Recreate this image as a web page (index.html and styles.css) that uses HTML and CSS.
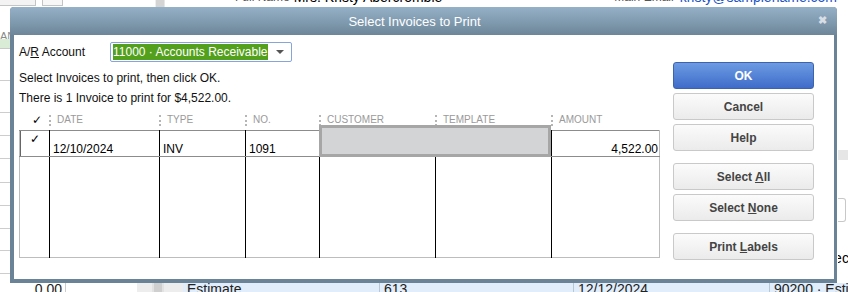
FILE: index.html
```html
<!DOCTYPE html>
<html lang="en">
<head>
    <meta charset="UTF-8">
    <title>Select Invoices to Print</title>
    <link rel="stylesheet" href="styles.css">
</head>
<body>
    <div class="screen">
        <div class="top-strip">
            <span class="top-box"></span>
            <span class="top-btn"></span>
            <span class="top-scroll"></span>
            <span class="top-label name-label">Full Name</span>
            <span class="top-value">Mrs. Kristy Abercrombie</span>
            <span class="top-label email-label">Main Email</span>
            <span class="top-link">kristy@samplename.com</span>
        </div>
        <div class="middle">
            <div class="left-col">
                <div class="lc-head">AN</div>
                <div class="lc-green"></div>
                <div class="lc-row" style="height:32px"></div>
                <div class="lc-row" style="height:32px"></div>
                <div class="lc-row" style="height:23px"></div>
                <div class="lc-row" style="height:23px"></div>
                <div class="lc-row" style="height:24px"></div>
                <div class="lc-row" style="height:23px"></div>
                <div class="lc-row" style="height:23px"></div>
                <div class="lc-row" style="height:22px"></div>
                <div class="lc-row" style="height:23px"></div>
            </div>
            <div class="mid-col"></div>
            <div class="right-col">
                <div class="rc-gap" style="height:143px"></div>
                <div class="rc-band"></div>
                <div class="rc-gap" style="height:38px"></div>
                <div class="rc-btn"></div>
                <div class="rc-gap" style="height:28px"></div>
                <div class="rc-text">Decl</div>
            </div>
        </div>
        <div class="bottom-strip">
            <div class="bs-num">0.00</div>
            <div class="bs-blank"></div>
            <div class="bs-scroll"><span></span></div>
            <div class="bs-row">
                <div class="bs-cell" style="width:192px">Estimate</div>
                <div class="bs-cell" style="width:189px">613</div>
                <div class="bs-cell" style="width:191px">12/12/2024</div>
                <div class="bs-cell">90200 · Estimates</div>
            </div>
        </div>
    </div>

    <div class="dialog">
        <div class="titlebar">
            <span class="title">Select Invoices to Print</span>
            <span class="close">&#10006;</span>
        </div>
        <div class="dialog-body">
            <div class="main">
                <div class="account-row">
                    <label class="account-label">A/<u>R</u> Account</label>
                    <div class="combo">
                        <span class="combo-text">11000 · Accounts Receivable</span>
                        <span class="combo-arrow"></span>
                    </div>
                </div>
                <p class="info">Select Invoices to print, then click OK.</p>
                <p class="info">There is 1 Invoice to print for $4,522.00.</p>

                <div class="grid-head">
                    <div class="gh-check">&#10003;</div>
                    <div class="gh-col">DATE</div>
                    <div class="gh-col">TYPE</div>
                    <div class="gh-col">NO.</div>
                    <div class="gh-col">CUSTOMER</div>
                    <div class="gh-col">TEMPLATE</div>
                    <div class="gh-col">AMOUNT</div>
                </div>
                <div class="grid-wrap">
                    <table class="grid">
                        <colgroup>
                            <col style="width:30px">
                            <col style="width:110px">
                            <col style="width:86px">
                            <col style="width:74px">
                            <col style="width:116px">
                            <col style="width:116px">
                            <col>
                        </colgroup>
                        <tr class="row">
                            <td class="check-cell">&#10003;</td>
                            <td>12/10/2024</td>
                            <td>INV</td>
                            <td>1091</td>
                            <td></td>
                            <td></td>
                            <td class="amount">4,522.00</td>
                        </tr>
                        <tr class="filler">
                            <td></td><td></td><td></td><td></td><td></td><td></td><td></td>
                        </tr>
                    </table>
                    <div class="selection"></div>
                </div>
            </div>
            <div class="buttons">
                <button class="btn btn-ok">OK</button>
                <button class="btn">Cancel</button>
                <button class="btn">Help</button>
                <button class="btn gap">Select <u>A</u>ll</button>
                <button class="btn">Select <u>N</u>one</button>
                <button class="btn gap">Print <u>L</u>abels</button>
            </div>
        </div>
    </div>
</body>
</html>
```

FILE: styles.css
```css
body {
    margin: 0;
    width: 848px;
    height: 292px;
    overflow: hidden;
    position: relative;
    font-family: "Liberation Sans", Arial, sans-serif;
    font-size: 12px;
    background-color: #ffffff;
    color: #000;
}

/* background window */
.screen {
    display: flex;
    flex-direction: column;
    height: 292px;
}
.top-strip {
    height: 7px;
    flex: none;
    display: flex;
    align-items: flex-start;
    overflow: hidden;
}
.top-strip > span {
    flex: none;
}
.top-box {
    width: 35px;
    height: 5px;
    background-color: #f3f3f3;
    border-right: 1px solid #c4c4c4;
    border-bottom: 1px solid #c4c4c4;
}
.top-btn {
    width: 19px;
    height: 5px;
    margin-left: 6px;
    border: 1px solid #c4c4c4;
    border-top: none;
    background-color: #f7f7f7;
}
.top-scroll {
    width: 8px;
    height: 7px;
    margin-left: 92px;
    background-color: #d4d4d4;
    border-left: 1px solid #eee;
    border-right: 1px solid #e6e6e6;
}
.top-label, .top-value, .top-link {
    line-height: 12px;
    margin-top: -9px;
    white-space: nowrap;
}
.top-label {
    color: #555;
}
.name-label {
    margin-left: 70px;
}
.top-value {
    margin-left: 4px;
    font-size: 14px;
}
.email-label {
    margin-left: 172px;
}
.top-link {
    margin-left: 6px;
    color: #2255c4;
    font-size: 14px;
}
.middle {
    display: flex;
    flex: none;
    height: 276px;
}
.left-col {
    width: 10px;
    display: flex;
    flex-direction: column;
}
.lc-head {
    height: 32px;
    box-sizing: border-box;
    padding-top: 23px;
    flex: none;
    color: #8a8a8a;
    font-size: 11px;
    line-height: 12px;
    overflow: hidden;
    white-space: nowrap;
}
.lc-green {
    height: 9px;
    flex: none;
    background-color: #d9ecd6;
    border-bottom: 1px solid #c9c9c9;
}
.lc-row {
    flex: none;
    border-bottom: 1px solid #cdcdcd;
    box-sizing: border-box;
}
.mid-col {
    flex: 1;
}
.right-col {
    width: 10px;
    display: flex;
    flex-direction: column;
    overflow: hidden;
}
.right-col > div {
    flex: none;
}
.rc-band {
    height: 10px;
    background-color: #e6e6e6;
}
.rc-btn {
    height: 22px;
    width: 7px;
    border: 1px solid #c8c8c8;
    border-left: none;
    border-radius: 0 3px 3px 0;
}
.rc-text {
    margin-left: -14px;
    font-size: 14px;
    white-space: nowrap;
}
.bottom-strip {
    height: 9px;
    flex: none;
    display: flex;
    overflow: hidden;
    font-size: 14px;
    line-height: 14px;
}
.bottom-strip > div {
    flex: none;
}
.bs-num {
    width: 62px;
    margin-top: -1px;
    text-align: right;
    padding-right: 3px;
    border-right: 1px solid #ccc;
    color: #222;
}
.bs-blank {
    width: 71px;
}
.bs-scroll {
    width: 46px;
    background-color: #ededed;
    display: flex;
    justify-content: center;
}
.bs-scroll span {
    width: 8px;
    background-color: #cfcfcf;
    border-left: 2px solid #e2e2e2;
    border-right: 2px solid #e2e2e2;
    margin-left: -4px;
}
.bottom-strip .bs-row {
    flex: 1;
    display: flex;
    background-color: #e1edfb;
}
.bs-cell {
    flex: none;
    margin-top: -1px;
    padding-left: 4px;
    border-right: 1px solid #b9c6d6;
    white-space: nowrap;
    color: #222;
}
.bs-cell:last-child {
    border-right: none;
}

/* dialog */
.dialog {
    position: absolute;
    left: 10px;
    top: 7px;
    width: 827px;
    height: 276px;
    box-sizing: border-box;
    border: 4px solid #6b8396;
    border-top: none;
    border-right-width: 3px;
    border-radius: 4px 4px 0 0;
    background-color: #ffffff;
    display: flex;
    flex-direction: column;
}
.titlebar {
    height: 28px;
    flex: none;
    margin: 0 -3px 0 -4px;
    border-radius: 4px 4px 0 0;
    background: linear-gradient(#95b1c7, #6d8699);
    display: flex;
    align-items: center;
    justify-content: center;
    position: relative;
}
.title {
    color: #ffffff;
    font-size: 13px;
    margin-right: 18px;
}
.close {
    position: absolute;
    right: 10px;
    top: 7px;
    color: #d7dee5;
    font-size: 11px;
    font-weight: bold;
}
.dialog-body {
    flex: 1;
    display: flex;
    padding: 7px 20px 0 5px;
}
.main {
    width: 641px;
    display: flex;
    flex-direction: column;
}
.account-row {
    display: flex;
    align-items: center;
    height: 20px;
}
.account-label {
    width: 91px;
    color: #111;
}
.combo {
    width: 178px;
    height: 18px;
    border: 1px solid #86a5d9;
    border-radius: 2px;
    display: flex;
    align-items: center;
    padding-left: 2px;
}
.combo-text {
    background-color: #53a01d;
    color: #ffffff;
    line-height: 16px;
    white-space: nowrap;
}
.combo-arrow {
    margin-left: 8px;
    width: 0;
    height: 0;
    border-left: 4px solid transparent;
    border-right: 4px solid transparent;
    border-top: 4px solid #555;
}
.info {
    margin: 0;
    line-height: 20px;
    color: #111;
}
.info:first-of-type {
    margin-top: 6px;
}
.grid-head {
    display: grid;
    grid-template-columns: 30px 110px 86px 74px 116px 116px 1fr;
    height: 22px;
    line-height: 24px;
    margin-left: 1px;
}
.gh-check {
    text-align: center;
    font-family: "DejaVu Sans", sans-serif;
    font-weight: bold;
    font-size: 12px;
    padding-left: 4px;
}
.gh-col {
    color: #9a9a9a;
    font-size: 10px;
    padding-left: 7px;
    position: relative;
}
.gh-col::before {
    content: "";
    position: absolute;
    left: -1px;
    top: 7px;
    height: 11px;
    border-left: 2px dotted #b5b5b5;
}
.grid-wrap {
    position: relative;
    width: 641px;
}
.grid {
    width: 641px;
    table-layout: fixed;
    border-collapse: collapse;
    border: 1px solid #bdbdbd;
    border-top-color: #8c8c8c;
}
.grid td {
    border-left: 1px solid #000;
    padding: 0 3px;
    white-space: nowrap;
    overflow: hidden;
}
.grid td:first-child {
    border-left: none;
}
.row td {
    height: 24px;
    border-bottom: 1px solid #8c8c8c;
    vertical-align: bottom;
    padding-bottom: 0;
    line-height: 14px;
}
.row .check-cell {
    text-align: center;
    vertical-align: top;
    padding-top: 1px;
    box-shadow: inset 1px 0 0 #666;
}
.row .amount {
    text-align: right;
    padding-right: 1px;
}
.filler td {
    height: 100px;
}
.selection {
    position: absolute;
    left: 300px;
    top: -5px;
    width: 226px;
    height: 26px;
    border: 3px solid #a6a6a6;
    background-color: #d3d4d6;
}

/* buttons */
.buttons {
    margin-left: 13px;
    width: 142px;
    display: flex;
    flex-direction: column;
    padding-top: 20px;
}
.btn {
    height: 27px;
    margin-bottom: 4px;
    border: 1px solid #c9c9c9;
    border-radius: 3px;
    background: linear-gradient(#fbfbfb, #ebebeb);
    font-family: "Liberation Sans", Arial, sans-serif;
    font-size: 12px;
    font-weight: bold;
    color: #444;
    padding: 0;
}
.btn.gap {
    margin-top: 8px;
}
.btn-ok {
    background: linear-gradient(#6c9be3, #3f6cc9);
    border-color: #3d63ad;
    color: #ffffff;
}
```
